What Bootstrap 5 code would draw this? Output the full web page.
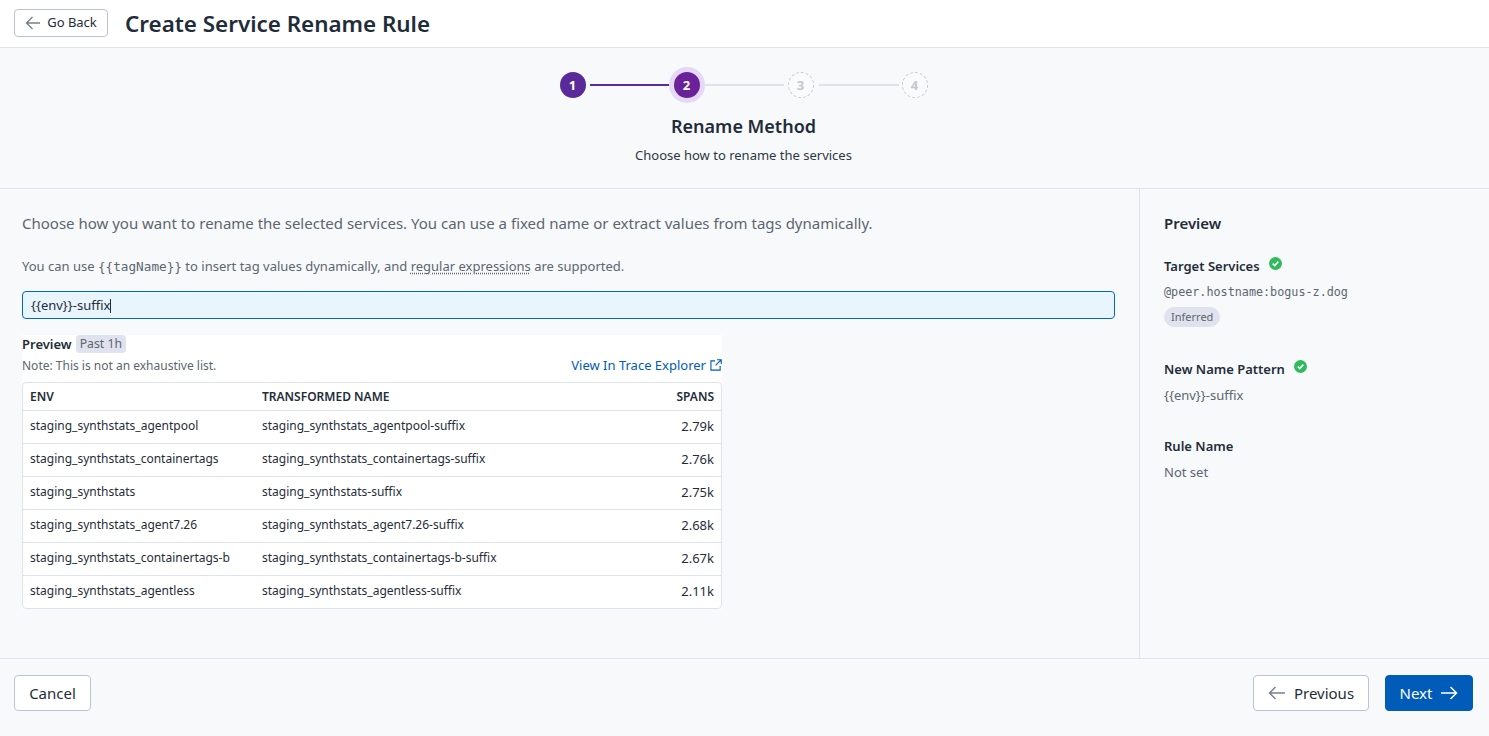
<!DOCTYPE html>
<html lang="en">
<head>
    <meta charset="UTF-8">
    <meta name="viewport" content="width=device-width, initial-scale=1.0">
    <title>Create Service Rename Rule</title>
    <link href="https://cdn.jsdelivr.net/npm/bootstrap@5.3.0/dist/css/bootstrap.min.css" rel="stylesheet">
    <style>
        html, body { height: 100%; }
        body {
            font-family: "Noto Sans", "Liberation Sans", sans-serif;
            background-color: #f8f9fb;
            color: #1f2d3a;
            font-size: 12px;
            line-height: 16px;
            overflow: hidden;
        }
        .page-wrap { height: 736px; }

        .top-bar {
            height: 48px;
            padding: 9px 14px 0;
            background-color: #fff;
            border-bottom: 1px solid #e0e2ee;
            gap: 17px;
        }
        .top-title { font-size: 22.4px; line-height: 30px; font-weight: 600; margin: 0; color: #1f2d3a; }
        .ghost-btn {
            background-color: #fff;
            border: 1px solid #bcc3d9;
            border-radius: 4px;
            color: #1f2d3a;
            padding: 0;
        }
        .ghost-btn:hover { background-color: #fff; border-color: #bcc3d9; }
        .back-btn { width: 94px; height: 28px; font-size: 13px; gap: 6px; }
        .foot-btn { height: 36px; font-size: 15px; gap: 8px; }
        .cancel-btn { width: 77px; }
        .prev-btn { width: 116px; }
        .next-btn {
            width: 88px;
            background-color: #005cb8;
            border: 1px solid #005cb8;
            border-radius: 4px;
            color: #fff;
            padding: 0;
        }
        .next-btn:hover { background-color: #005cb8; border-color: #005cb8; color: #fff; }

        .step-area {
            height: 141px;
            border-bottom: 1px solid #e0e2ee;
            padding: 18px 2px 0 0;
        }
        .step-row { height: 38px; margin-left: 1px; }
        .step-dot {
            width: 26px;
            height: 26px;
            border-radius: 50%;
            font-size: 13px;
            font-weight: 700;
            flex: none;
            padding-right: 1px;
        }
        .step-done { background-color: #5a2a9b; color: #fff; }
        .step-now {
            background-color: #6b2299;
            color: #fff;
            box-shadow: 0 0 0 5px #e6d8f7;
        }
        .step-todo { border: 1px dashed #c8cad0; color: #c6c8cc; background-color: #fafbfd; }
        .step-line { height: 2px; background-color: #e0e2ea; flex: none; }
        .line-one { width: 80px; margin: 0 4px; background-color: #5a2a9b; }
        .line-two { width: 79px; margin: 0 4px 0 5px; }
        .line-three { width: 80px; margin: 0 3px 0 5px; }
        .step-title { font-size: 18px; line-height: 24px; font-weight: 600; margin: 10px 0 0; }
        .step-sub { font-size: 13px; line-height: 18px; margin: 8px 0 0; color: #2b3844; }

        .body-area { height: 469px; }
        .left-pane { width: 1139px; flex: none; padding: 24px 24px 0 22px; }
        .right-pane { flex: 1; border-left: 1px solid #e0e2ee; padding: 24px 24px 0 24px; }

        .intro { font-size: 15px; line-height: 20px; color: #5b6670; margin: 0; }
        .help-line { font-size: 13px; line-height: 18px; color: #5b6670; margin: 24px 0 0; }
        .help-line code {
            font-family: "DejaVu Sans Mono", "Liberation Mono", monospace;
            font-size: 12.7px;
            color: #5b6670;
        }
        .help-line a { color: inherit; text-decoration: underline; text-decoration-style: dotted; text-underline-offset: 2px; }

        .input-wrap { margin-top: 15px; }
        .name-input {
            height: 28px;
            padding: 0 8px;
            font-size: 13px;
            line-height: 26px;
            color: #1f2d3a;
            background-color: #e8f5fd;
            border: 1px solid #0067c9;
            border-radius: 4px;
        }
        .name-input:focus { background-color: #e8f5fd; border-color: #0067c9; box-shadow: none; color: #1f2d3a; }
        .text-caret {
            position: absolute;
            left: 88px;
            top: 8px;
            width: 1px;
            height: 14px;
            background-color: #1f2d3a;
        }

        .result-box { width: 700px; background-color: #fff; margin-top: 16px; height: 274px; }
        .result-head { height: 47px; }
        .result-label { font-weight: 600; font-size: 13px; line-height: 18px; }
        .time-tag {
            background-color: #e0e2ee;
            color: #5b6670;
            border-radius: 4px;
            font-size: 12.25px;
            line-height: 18px;
            padding: 0 4px;
            margin-left: 4px;
        }
        .note-line { color: #5b6670; font-size: 12px; line-height: 16px; }
        .head-second { margin-top: 5px; }
        .trace-link { color: #005cb8; font-size: 13px; line-height: 16px; text-decoration: none; gap: 4px; margin-top: -2px; }

        .result-table { border: 1px solid #e0e2ee; border-radius: 4px; overflow: hidden; }
        .result-table table { margin: 0; font-size: 12px; table-layout: fixed; width: 100%; }
        .result-table th {
            font-size: 12px;
            font-weight: 600;
            height: 27px;
            padding: 2px 7px 0;
            line-height: 16px;
            color: #1f2d3a;
            vertical-align: middle;
            border-bottom: 1px solid #e0e2ee;
        }
        .result-table td {
            height: 33px;
            padding: 0 7px 1px;
            color: #1f2d3a;
            vertical-align: middle;
            border-bottom: 1px solid #e0e2ee;
        }
        .result-table tr:last-child td { border-bottom: 0; }
        .result-table .num-cell { font-size: 13px; padding-bottom: 2px; }
        .col-env { width: 232px; }
        .col-name { width: auto; }
        .col-spans { width: 100px; }

        .side-title { font-size: 15px; line-height: 20px; font-weight: 600; margin: 0; }
        .side-block { margin-top: 24px; }
        .side-block.tight { margin-top: 33px; }
        .side-block.last-block { margin-top: 33px; }
        .side-label { font-size: 13px; line-height: 18px; font-weight: 600; margin: 0; gap: 9px; }
        .side-value { font-size: 13px; line-height: 18px; color: #5b6670; margin: 8px 0 0; }
        .mono-value {
            font-family: "DejaVu Sans Mono", "Liberation Mono", monospace;
            font-size: 11.75px;
            line-height: 18px;
            color: #5b6670;
            margin: 8px 0 0;
        }
        .pill-tag {
            background-color: #e0e2ee;
            color: #5b6670;
            border-radius: 10px;
            font-size: 11px;
            line-height: 20px;
            height: 20px;
            padding: 0 7px;
            margin-top: 6px;
        }
        .check-icon { margin-top: -5px; }

        .foot-bar { height: 78px; border-top: 1px solid #e0e2ee; padding: 16px 16px 0 14px; }
    </style>
</head>
<body>
    <div class="page-wrap d-flex flex-column">
        <div class="top-bar d-flex align-items-start">
            <button type="button" class="btn ghost-btn back-btn d-flex align-items-center justify-content-center">
                <svg width="16" height="14" viewBox="0 0 16 14" fill="none" stroke="#77808a" stroke-width="1.4"><path d="M15 7H1.5M7.5 1 1.5 7l6 6"/></svg>
                Go Back
            </button>
            <h1 class="top-title">Create Service Rename Rule</h1>
        </div>

        <div class="step-area text-center">
            <div class="step-row d-flex align-items-center justify-content-center">
                <div class="step-dot step-done d-flex align-items-center justify-content-center">1</div>
                <div class="step-line line-one"></div>
                <div class="step-dot step-now d-flex align-items-center justify-content-center">2</div>
                <div class="step-line line-two"></div>
                <div class="step-dot step-todo d-flex align-items-center justify-content-center">3</div>
                <div class="step-line line-three"></div>
                <div class="step-dot step-todo d-flex align-items-center justify-content-center">4</div>
            </div>
            <h2 class="step-title">Rename Method</h2>
            <p class="step-sub">Choose how to rename the services</p>
        </div>

        <div class="body-area d-flex">
            <div class="left-pane">
                <p class="intro">Choose how you want to rename the selected services. You can use a fixed name or extract values from tags dynamically.</p>
                <p class="help-line">You can use <code>{{tagName}}</code> to insert tag values dynamically, and <a href="#">regular expressions</a> are supported.</p>
                <div class="input-wrap position-relative">
                    <input type="text" class="form-control name-input" value="{{env}}-suffix">
                    <span class="text-caret"></span>
                </div>

                <div class="result-box">
                    <div class="result-head">
                        <div class="d-flex align-items-center">
                            <span class="result-label">Preview</span>
                            <span class="time-tag">Past 1h</span>
                        </div>
                        <div class="head-second d-flex justify-content-between align-items-center">
                            <span class="note-line">Note: This is not an exhaustive list.</span>
                            <a href="#" class="trace-link d-flex align-items-center">View In Trace Explorer
                                <svg width="12" height="12" viewBox="0 0 13 13" fill="none" stroke="#005cb8" stroke-width="1.2"><path d="M5.5 2H1v10h10V7.5M7.5.8h4.7v4.7M12 1 6 7"/></svg>
                            </a>
                        </div>
                    </div>
                    <div class="result-table">
                        <table class="table table-borderless">
                            <colgroup><col class="col-env"><col class="col-name"><col class="col-spans"></colgroup>
                            <thead>
                                <tr><th>ENV</th><th>TRANSFORMED NAME</th><th class="text-end">SPANS</th></tr>
                            </thead>
                            <tbody>
                                <tr><td>staging_synthstats_agentpool</td><td>staging_synthstats_agentpool-suffix</td><td class="text-end num-cell">2.79k</td></tr>
                                <tr><td>staging_synthstats_containertags</td><td>staging_synthstats_containertags-suffix</td><td class="text-end num-cell">2.76k</td></tr>
                                <tr><td>staging_synthstats</td><td>staging_synthstats-suffix</td><td class="text-end num-cell">2.75k</td></tr>
                                <tr><td>staging_synthstats_agent7.26</td><td>staging_synthstats_agent7.26-suffix</td><td class="text-end num-cell">2.68k</td></tr>
                                <tr><td>staging_synthstats_containertags-b</td><td>staging_synthstats_containertags-b-suffix</td><td class="text-end num-cell">2.67k</td></tr>
                                <tr><td>staging_synthstats_agentless</td><td>staging_synthstats_agentless-suffix</td><td class="text-end num-cell">2.11k</td></tr>
                            </tbody>
                        </table>
                    </div>
                </div>
            </div>

            <div class="right-pane">
                <h3 class="side-title">Preview</h3>
                <div class="side-block">
                    <p class="side-label d-flex align-items-center">Target Services
                        <svg class="check-icon" width="13" height="13" viewBox="0 0 14 14"><circle cx="7" cy="7" r="7" fill="#2fbb5b"/><path d="M4 7.2 6.2 9.3 10 5" fill="none" stroke="#fff" stroke-width="1.7"/></svg>
                    </p>
                    <p class="mono-value">@peer.hostname:bogus-z.dog</p>
                    <span class="pill-tag d-inline-block">Inferred</span>
                </div>
                <div class="side-block tight">
                    <p class="side-label d-flex align-items-center">New Name Pattern
                        <svg class="check-icon" width="13" height="13" viewBox="0 0 14 14"><circle cx="7" cy="7" r="7" fill="#2fbb5b"/><path d="M4 7.2 6.2 9.3 10 5" fill="none" stroke="#fff" stroke-width="1.7"/></svg>
                    </p>
                    <p class="side-value">{{env}}-suffix</p>
                </div>
                <div class="side-block last-block">
                    <p class="side-label">Rule Name</p>
                    <p class="side-value">Not set</p>
                </div>
            </div>
        </div>

        <div class="foot-bar d-flex justify-content-between align-items-start">
            <button type="button" class="btn ghost-btn foot-btn cancel-btn">Cancel</button>
            <div class="d-flex gap-3">
                <button type="button" class="btn ghost-btn foot-btn prev-btn d-flex align-items-center justify-content-center">
                    <svg width="18" height="14" viewBox="0 0 18 14" fill="none" stroke="#77808a" stroke-width="1.5"><path d="M17 7H1.5M7.5 1 1.5 7l6 6"/></svg>
                    Previous
                </button>
                <button type="button" class="btn next-btn foot-btn d-flex align-items-center justify-content-center">
                    Next
                    <svg width="18" height="14" viewBox="0 0 18 14" fill="none" stroke="#fff" stroke-width="1.5"><path d="M1 7h15.5M10.5 1l6 6-6 6"/></svg>
                </button>
            </div>
        </div>
    </div>

    <script src="https://cdn.jsdelivr.net/npm/bootstrap@5.3.0/dist/js/bootstrap.bundle.min.js"></script>
</body>
</html>
